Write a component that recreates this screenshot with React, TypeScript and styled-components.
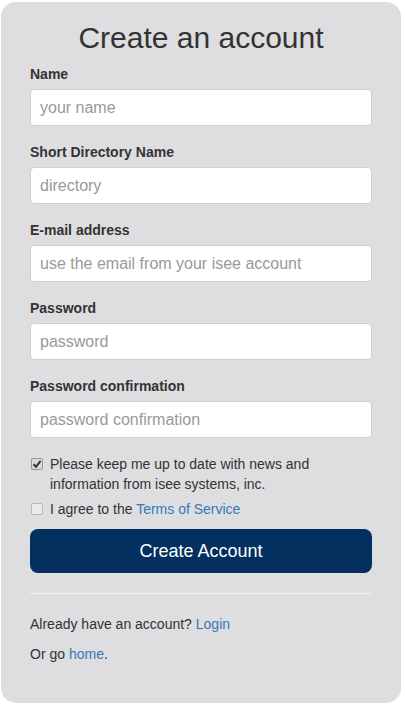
import React from "react";
import styled, { createGlobalStyle } from "styled-components";

const GlobalStyle = createGlobalStyle`
  html, body { margin: 0; padding: 0; background: #ffffff; }
  body { font-family: "Liberation Sans", Arial, sans-serif; color: #333; }
  * { box-sizing: border-box; }
`;

const Page = styled.div`
  width: 405px;
  height: 707px;
  padding: 2px 4px 4px 1px;
`;

const Card = styled.div`
  width: 400px;
  height: 701px;
  background: #dedde0;
  border-radius: 15px;
  padding: 19px 29px 0 29px;
  display: flex;
  flex-direction: column;
`;

const Title = styled.h1`
  margin: 0 0 10px 0;
  font-size: 30px;
  line-height: 33px;
  font-weight: 400;
  text-align: center;
  color: #333;
`;

const Group = styled.div`
  display: flex;
  flex-direction: column;
  margin-bottom: 16px;
`;

const Label = styled.label`
  font-size: 14px;
  line-height: 20px;
  font-weight: 700;
  color: #333;
  margin-bottom: 5px;
`;

const Input = styled.input`
  height: 37px;
  width: 342px;
  border: 1px solid #cfcfd3;
  border-radius: 4px;
  background: #fff;
  padding: 0 9px;
  font-family: "Liberation Sans", Arial, sans-serif;
  font-size: 16px;
  color: #555;
  outline: none;
  &::placeholder { color: #999; }
`;

const CheckRow = styled.label<{ $gap: number }>`
  display: flex;
  align-items: flex-start;
  font-size: 14px;
  line-height: 20px;
  color: #333;
  margin-bottom: ${(p) => p.$gap}px;
`;

const Box = styled.span<{ $checked: boolean }>`
  flex: none;
  width: 12px;
  height: 12px;
  margin: 4px 7px 0 1px;
  border: 1px solid ${(p) => (p.$checked ? "#9a9a9a" : "#b9b9bd")};
  border-radius: 2px;
  background: ${(p) => (p.$checked ? "#d9d9dc" : "#eaeaec")};
  display: flex;
  align-items: center;
  justify-content: center;
`;

const Link = styled.a`
  color: #337ab7;
  text-decoration: none;
`;

const Button = styled.button`
  width: 342px;
  height: 44px;
  margin-top: 5px;
  border: none;
  border-radius: 8px;
  background: #03305f;
  color: #fff;
  font-family: "Liberation Sans", Arial, sans-serif;
  font-size: 18px;
  line-height: 20px;
`;

const Divider = styled.hr`
  width: 342px;
  margin: 20px 0 20px 0;
  border: none;
  border-top: 1px solid #f2f2f4;
`;

const Para = styled.p`
  margin: 0 0 10px 0;
  font-size: 14px;
  line-height: 20px;
  color: #333;
`;

const Check = () => (
  <svg width="10" height="10" viewBox="0 0 10 10">
    <path d="M1.5 5.2 L4 7.8 L8.6 1.8" fill="none" stroke="#333" strokeWidth="2" />
  </svg>
);

export default function App() {
  return (
    <>
      <GlobalStyle />
      <Page>
        <Card>
          <Title>Create an account</Title>
          <Group>
            <Label>Name</Label>
            <Input placeholder="your name" />
          </Group>
          <Group>
            <Label>Short Directory Name</Label>
            <Input placeholder="directory" />
          </Group>
          <Group>
            <Label>E-mail address</Label>
            <Input placeholder="use the email from your isee account" />
          </Group>
          <Group>
            <Label>Password</Label>
            <Input placeholder="password" type="password" />
          </Group>
          <Group>
            <Label>Password confirmation</Label>
            <Input placeholder="password confirmation" type="password" />
          </Group>
          <CheckRow $gap={5}>
            <Box $checked={true}>
              <Check />
            </Box>
            <span>
              Please keep me up to date with news and
              <br />
              information from isee systems, inc.
            </span>
          </CheckRow>
          <CheckRow $gap={5}>
            <Box $checked={false} />
            <span>
              I agree to the <Link href="#">Terms of Service</Link>
            </span>
          </CheckRow>
          <Button>Create Account</Button>
          <Divider />
          <Para>
            Already have an account? <Link href="#">Login</Link>
          </Para>
          <Para>
            Or go <Link href="#">home</Link>.
          </Para>
        </Card>
      </Page>
    </>
  );
}
